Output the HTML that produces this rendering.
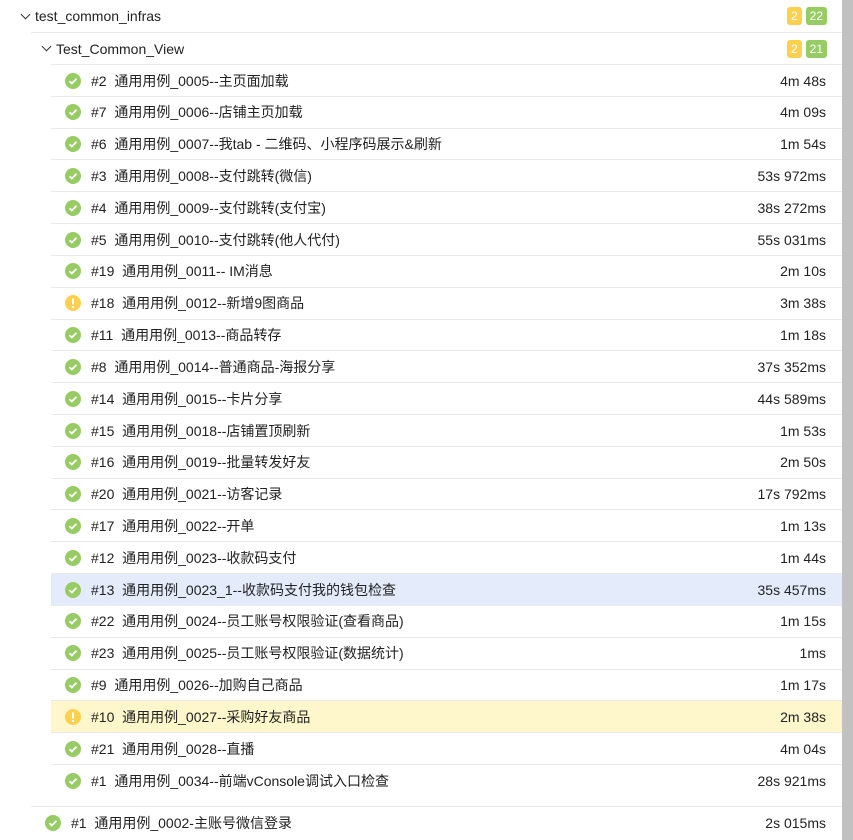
<!DOCTYPE html>
<html><head><meta charset="utf-8"><style>
body{margin:0;width:853px;height:840px;overflow:hidden;background:#fff;font-family:"Liberation Sans","WenQuanYi Zen Hei","Noto Sans CJK SC",sans-serif;font-size:14px;color:#222;position:relative}
.sb{position:absolute;left:842px;top:0;width:11px;height:840px;background:#c1c1c1}
.r{position:absolute;right:11px;display:flex;align-items:center;border-top:1px solid #eaeaea;box-sizing:border-box}
.r .d{position:absolute;right:16px;line-height:1}
.ic{width:16px;height:16px;border-radius:50%;display:inline-flex;align-items:center;justify-content:center;flex:none}
.ok{background:#97cc64}.br{background:#ffd050}
.t{margin-left:10px;white-space:pre;line-height:1}
.b{display:inline-block;height:18px;line-height:18px;padding:0 4px;border-radius:3px;color:#fff;font-size:12px;margin-left:4px}
.by{background:#ffd050}.bg{background:#97cc64}
.badges{position:absolute;right:15px}
.chev{width:6px;height:6px;border-right:1.2px solid #333;border-bottom:1.2px solid #333;transform:rotate(45deg);margin-top:-4px;margin-right:6px}
</style></head><body>
<div class="sb"></div>
<div class="r" style="left:0;top:0;height:32px;border-top:none;padding-left:22px"><div class="chev"></div><span style="font-size:14px">test_common_infras</span><span class="badges"><span class="b by">2</span><span class="b bg">22</span></span></div>
<div class="r" style="left:31px;top:32px;height:32px;padding-left:12px"><div class="chev"></div><span style="font-size:14px">Test_Common_View</span><span class="badges"><span class="b by">2</span><span class="b bg">21</span></span></div>
<div id="items"></div>
<script>
var ok='<svg width="10" height="10" viewBox="0 0 10 10"><path d="M1.5 5.2l2.3 2.3 4.7-4.8" fill="none" stroke="#fff" stroke-width="1.8"/></svg>';
var br='<svg width="10" height="12" viewBox="0 0 10 12"><rect x="4" y="1.5" width="2" height="6" fill="#fff"/><rect x="4" y="9" width="2" height="2" fill="#fff"/></svg>';
var d=[["#2","通用用例_0005--主页面加载","4m 48s"],["#7","通用用例_0006--店铺主页加载","4m 09s"],["#6","通用用例_0007--我tab - 二维码、小程序码展示&刷新","1m 54s"],["#3","通用用例_0008--支付跳转(微信)","53s 972ms"],["#4","通用用例_0009--支付跳转(支付宝)","38s 272ms"],["#5","通用用例_0010--支付跳转(他人代付)","55s 031ms"],["#19","通用用例_0011-- IM消息","2m 10s"],["#18","通用用例_0012--新增9图商品","3m 38s",1],["#11","通用用例_0013--商品转存","1m 18s"],["#8","通用用例_0014--普通商品-海报分享","37s 352ms"],["#14","通用用例_0015--卡片分享","44s 589ms"],["#15","通用用例_0018--店铺置顶刷新","1m 53s"],["#16","通用用例_0019--批量转发好友","2m 50s"],["#20","通用用例_0021--访客记录","17s 792ms"],["#17","通用用例_0022--开单","1m 13s"],["#12","通用用例_0023--收款码支付","1m 44s"],["#13","通用用例_0023_1--收款码支付我的钱包检查","35s 457ms",0,"#e4ecfc"],["#22","通用用例_0024--员工账号权限验证(查看商品)","1m 15s"],["#23","通用用例_0025--员工账号权限验证(数据统计)","1ms"],["#9","通用用例_0026--加购自己商品","1m 17s"],["#10","通用用例_0027--采购好友商品","2m 38s",1,"#fdf7cb"],["#21","通用用例_0028--直播","4m 04s"],["#1","通用用例_0034--前端vConsole调试入口检查","28s 921ms"]];
var h='';
d.forEach(function(x,i){var top=64+i*31.82;
h+='<div class="r" style="left:51px;top:'+top+'px;height:32px;padding-left:14px;background:'+(x[4]||'#fff')+'"><span class="ic '+(x[3]?'br':'ok')+'">'+(x[3]?br:ok)+'</span><span class="t">'+x[0]+'  '+x[1]+'</span><span class="d">'+x[2]+'</span></div>';});
h+='<div class="r" style="left:31px;top:806px;height:32px;padding-left:14px"><span class="ic ok">'+ok+'</span><span class="t">#1  通用用例_0002-主账号微信登录</span><span class="d">2s 015ms</span></div>';
document.getElementById('items').innerHTML=h;
</script>
</body></html>
